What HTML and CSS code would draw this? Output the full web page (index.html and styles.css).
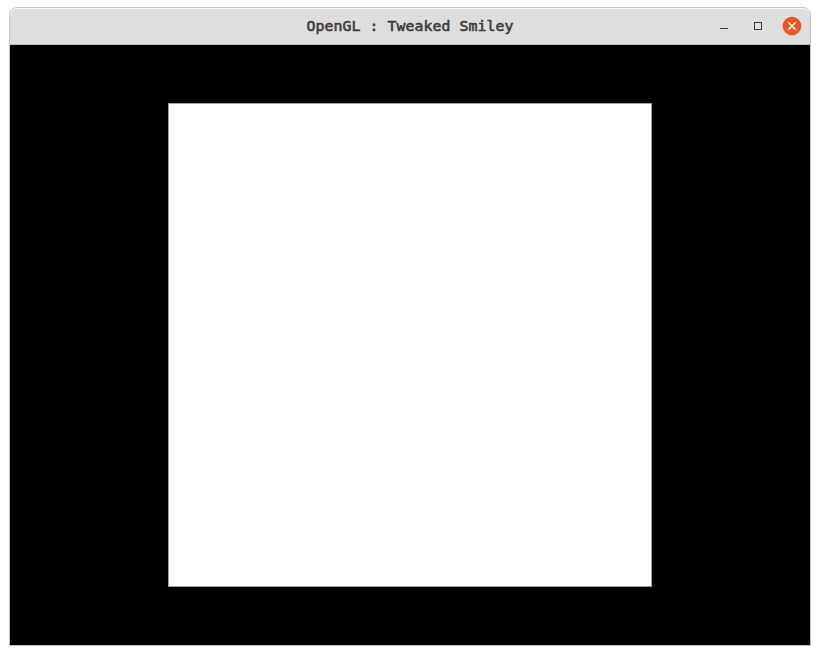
FILE: index.html
```html
<!DOCTYPE html>
<html lang="en">
<head>
<meta charset="utf-8">
<title>OpenGL : Tweaked Smiley</title>
<link rel="stylesheet" href="styles.css">
</head>
<body>
<main class="window">
  <header class="titlebar">
    <h1 class="title">OpenGL : Tweaked Smiley</h1>
    <svg class="controls" width="92" height="34" viewBox="0 0 92 34">
      <path d="M10 19.5h8" stroke="#3d3d3d" fill="none"/>
      <rect x="44.5" y="13.5" width="7" height="7" stroke="#3d3d3d" fill="none"/>
      <circle cx="82" cy="17" r="9.3" fill="#e95420"/>
      <path d="M78.3 13.3l7.4 7.4m0-7.4l-7.4 7.4" stroke="#fff" stroke-width="1.4" fill="none"/>
    </svg>
  </header>
  <section class="viewport"><div class="quad"></div></section>
</main>
</body>
</html>
```
FILE: styles.css
```css
* { box-sizing: border-box; }
body { margin: 0; background: #fff; }
.window {
  width: 802px;
  height: 639px;
  margin: 7px 9px 0;
  border: 1px solid #c2c2c2;
  border-radius: 8px 8px 0 0;
  overflow: hidden;
}
.titlebar {
  height: 37px;
  display: grid;
  grid-template-columns: 1fr auto 1fr;
  align-items: center;
  background: #dedede;
  border-bottom: 1px solid #bfbfbf;
  border-radius: 7px 7px 0 0;
  box-shadow: inset 0 1px #f8f8f8;
}
.title {
  grid-column: 2;
  margin: 0;
  font: normal 14.8px/34px "DejaVu Sans Mono", monospace;
  letter-spacing: 0.1px;
  color: #3d3d3d;
  -webkit-text-stroke: 0.6px #3d3d3d;
}
.controls { justify-self: end; margin-right: 8px; }
.viewport {
  height: 600px;
  display: grid;
  place-items: center;
  background: #000;
}
.quad {
  width: 484px;
  height: 484px;
  background: #fff;
  border: 1px solid #a0a0a0;
}
```
